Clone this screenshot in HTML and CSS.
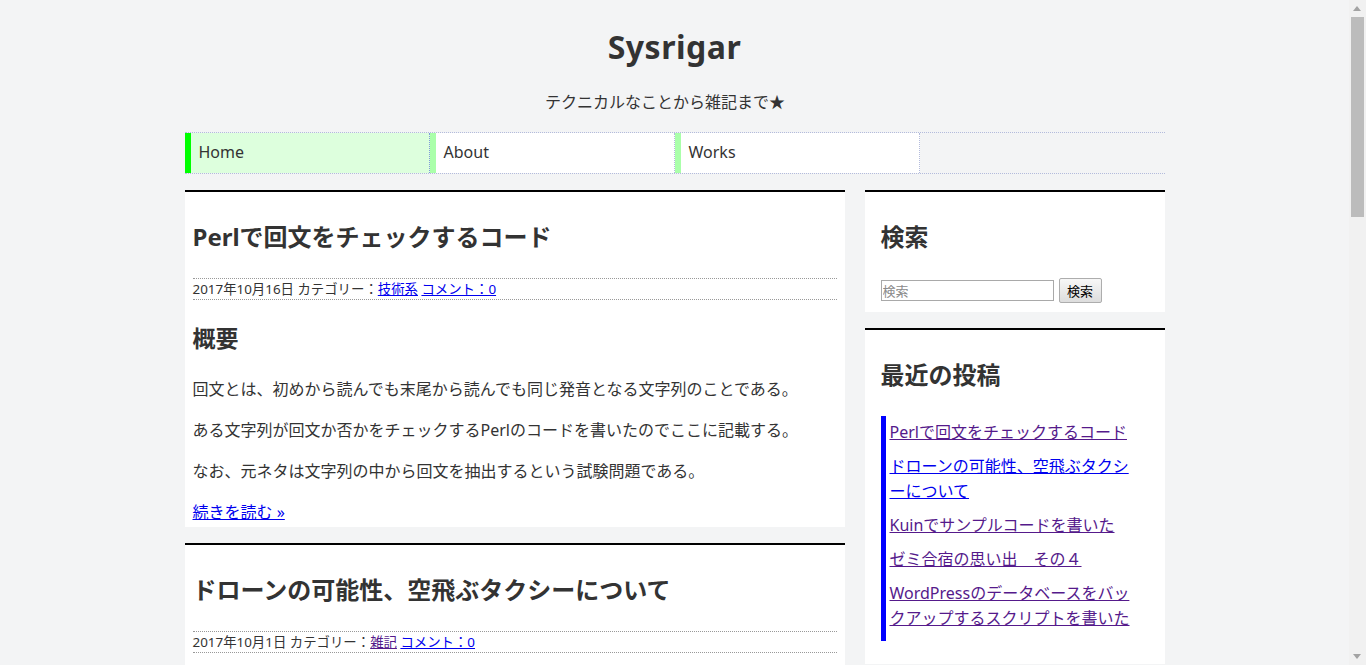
FILE: index.html
```html
<!DOCTYPE html>
<html lang="ja">
<head>
<meta charset="utf-8">
<title>Sysrigar</title>
<link rel="stylesheet" href="styles.css">
</head>
<body>
<div class="wrap">
  <header class="site-header">
    <h1 class="site-title">Sysrigar</h1>
    <p class="site-desc">テクニカルなことから雑記まで★</p>
  </header>
  <nav class="gnav">
    <ul class="gnav-list">
      <li class="gnav-item current"><a href="#">Home</a></li>
      <li class="gnav-item"><a href="#">About</a></li>
      <li class="gnav-item"><a href="#">Works</a></li>
    </ul>
  </nav>
  <div class="columns">
    <main class="main">
      <article class="post">
        <h2 class="post-title">Perlで回文をチェックするコード</h2>
        <div class="post-meta">2017年10月16日 カテゴリー：<a href="#" class="lnk">技術系</a> <a href="#" class="lnk">コメント：0</a></div>
        <h3 class="post-h3">概要</h3>
        <p>回文とは、初めから読んでも末尾から読んでも同じ発音となる文字列のことである。</p>
        <p>ある文字列が回文か否かをチェックするPerlのコードを書いたのでここに記載する。</p>
        <p>なお、元ネタは文字列の中から回文を抽出するという試験問題である。</p>
        <p class="more"><a href="#" class="lnk">続きを読む »</a></p>
      </article>
      <article class="post">
        <h2 class="post-title">ドローンの可能性、空飛ぶタクシーについて</h2>
        <div class="post-meta">2017年10月1日 カテゴリー：<a href="#" class="lnk visited">雑記</a> <a href="#" class="lnk">コメント：0</a></div>
        <h3 class="post-h3">はじめに</h3>
        <p>最近、ドローンを使った空飛ぶタクシーの実験が話題になっている。</p>
        <p>ドローンの可能性について思うところを書いてみる。</p>
        <p>なお、あくまで個人の感想である。</p>
        <p class="more"><a href="#" class="lnk">続きを読む »</a></p>
      </article>
      <article class="post">
        <h2 class="post-title">Kuinでサンプルコードを書いた</h2>
        <div class="post-meta">2017年9月18日 カテゴリー：<a href="#" class="lnk">技術系</a> <a href="#" class="lnk">コメント：0</a></div>
        <h3 class="post-h3">概要</h3>
        <p>Kuinというプログラミング言語でサンプルコードを書いてみた。</p>
        <p>簡単なウィンドウを表示するだけのプログラムである。</p>
        <p>環境構築の手順も合わせて記載する。</p>
        <p class="more"><a href="#" class="lnk">続きを読む »</a></p>
      </article>
      <article class="post">
        <h2 class="post-title">ゼミ合宿の思い出　その４</h2>
        <div class="post-meta">2017年9月3日 カテゴリー：<a href="#" class="lnk visited">雑記</a> <a href="#" class="lnk">コメント：0</a></div>
        <h3 class="post-h3">４日目</h3>
        <p>合宿もいよいよ最終日となった。</p>
        <p>午前中は最終発表を行い、午後は観光をして帰路についた。</p>
        <p>とても充実した４日間であった。</p>
        <p class="more"><a href="#" class="lnk">続きを読む »</a></p>
      </article>
      <article class="post">
        <h2 class="post-title">WordPressのデータベースをバックアップするスクリプト</h2>
        <div class="post-meta">2017年8月20日 カテゴリー：<a href="#" class="lnk">技術系</a> <a href="#" class="lnk">コメント：0</a></div>
        <h3 class="post-h3">概要</h3>
        <p>WordPressのデータベースを定期的にバックアップするスクリプトを書いた。</p>
        <p>cronで毎日実行し、古いバックアップは自動で削除する。</p>
        <p>シェルスクリプトで簡単に実装できる。</p>
        <p class="more"><a href="#" class="lnk">続きを読む »</a></p>
      </article>
    </main>
    <aside class="sidebar">
      <section class="widget">
        <h2 class="widget-title">検索</h2>
        <form class="search">
          <input class="search-input" type="text" placeholder="検索">
          <button class="search-btn" type="button">検索</button>
        </form>
      </section>
      <section class="widget">
        <h2 class="widget-title">最近の投稿</h2>
        <ul class="recent">
          <li><a href="#" class="lnk visited">Perlで回文をチェックするコード</a></li>
          <li><a href="#" class="lnk">ドローンの可能性、空飛ぶタクシーについて</a></li>
          <li><a href="#" class="lnk visited">Kuinでサンプルコードを書いた</a></li>
          <li><a href="#" class="lnk visited">ゼミ合宿の思い出　その４</a></li>
          <li><a href="#" class="lnk visited">WordPressのデータベースをバックアップするスクリプトを書いた</a></li>
        </ul>
      </section>
      <section class="widget">
        <h2 class="widget-title">アーカイブ</h2>
        <ul class="recent">
          <li><a href="#" class="lnk">2017年10月</a></li>
          <li><a href="#" class="lnk">2017年9月</a></li>
          <li><a href="#" class="lnk">2017年8月</a></li>
        </ul>
      </section>
      <section class="widget">
        <h2 class="widget-title">カテゴリー</h2>
        <ul class="recent">
          <li><a href="#" class="lnk">技術系</a></li>
          <li><a href="#" class="lnk visited">雑記</a></li>
        </ul>
      </section>
    </aside>
  </div>
  <footer class="site-footer">Copyright © Sysrigar All Rights Reserved.</footer>
</div>
<div class="fake-scrollbar" aria-hidden="true">
  <div class="sb-arrow sb-up"></div>
  <div class="sb-track"><div class="sb-thumb"></div></div>
  <div class="sb-arrow sb-down"></div>
</div>
</body>
</html>
```
FILE: styles.css
```css
html, body {
  margin: 0;
  padding: 0;
}
html {
  background: #f3f4f5;
}
body {
  background: #f3f4f5;
  color: #333;
  font-family: "Noto Sans", "Noto Sans CJK JP", sans-serif;
  font-size: 16px;
  padding-right: 17px;
}

/* fake window scrollbar (browser chrome in the reference) */
.fake-scrollbar {
  position: fixed;
  top: 0;
  right: 0;
  width: 17px;
  height: 100vh;
  background: #f1f1f1;
  display: flex;
  flex-direction: column;
}
.sb-arrow {
  height: 17px;
  flex: none;
  position: relative;
}
.sb-up::after,
.sb-down::after {
  content: "";
  position: absolute;
  left: 4px;
  width: 0;
  height: 0;
  border-left: 4.5px solid transparent;
  border-right: 4.5px solid transparent;
}
.sb-up::after {
  top: 6px;
  border-bottom: 5px solid #a3a3a3;
}
.sb-down::after {
  top: 6px;
  border-top: 5px solid #a3a3a3;
}
.sb-track {
  flex: 1;
  padding: 0 2px;
}
.sb-thumb {
  height: 200px;
  background: #bcbcbc;
}

.wrap {
  width: 980px;
  margin: 0 auto;
}

.site-header {
  text-align: center;
}
.site-title {
  margin: 27px 0 0;
  font-size: 32px;
  line-height: 40px;
  font-weight: bold;
  letter-spacing: 0.5px;
  color: #333;
}
.site-desc {
  margin: 23px 0 0;
  padding-right: 19px;
  font-size: 16px;
  line-height: 24px;
}

.gnav {
  margin-top: 18px;
}
.gnav-list {
  display: flex;
  list-style: none;
  margin: 0;
  padding: 0;
  border-top: 1px dotted #b3bbdc;
  border-bottom: 1px dotted #b3bbdc;
}
.gnav-item {
  box-sizing: border-box;
  width: 245px;
  height: 40px;
  line-height: 38px;
  padding-left: 8px;
  background: #fff;
  border-left: 6px solid #aaffaa;
  border-right: 1px dotted #b3bbdc;
}
.gnav-item.current {
  background: #ddffdd;
  border-left-color: #00ff00;
  border-right-color: #7f9bd8;
}
.gnav-item a {
  color: #333;
  text-decoration: none;
  font-size: 16px;
}

.columns {
  display: flex;
  gap: 20px;
  margin-top: 16px;
  align-items: flex-start;
}
.main {
  width: 660px;
}
.sidebar {
  width: 300px;
}

.lnk {
  color: #0000ee;
}
.lnk.visited {
  color: #551a8b;
}

.post {
  background: #fff;
  border-top: 2px solid #000;
  padding: 0 8px 2px;
  margin-bottom: 16px;
}
.post-title {
  margin: 27px 0 23px;
  font-size: 24px;
  line-height: 36px;
  font-weight: bold;
}
.post-meta {
  font-size: 13.4px;
  line-height: 20px;
  border-top: 1px dotted #999;
  border-bottom: 1px dotted #999;
}
.post-h3 {
  margin: 21px 0 22px;
  font-size: 23px;
  line-height: 34px;
  font-weight: bold;
}
.post p {
  margin: 0 0 16px;
  line-height: 25px;
  font-size: 16px;
}
.post p.more {
  margin-bottom: 0;
}

.widget {
  background: #fff;
  border-top: 2px solid #000;
  padding: 0 16px 9px;
  margin-bottom: 16px;
}
.widget-title {
  margin: 27px 0 23px;
  font-size: 24px;
  line-height: 36px;
  font-weight: bold;
}
.search {
  display: flex;
  align-items: center;
  height: 25px;
}
.search-input {
  box-sizing: border-box;
  width: 173px;
  height: 21px;
  border: 1px solid #a9a9a9;
  padding: 1px 1px;
  font-family: "Noto Sans CJK JP", sans-serif;
  font-size: 13px;
  color: #333;
  background: #fff;
  outline: none;
}
.search-input::placeholder {
  color: #8a8a8a;
}
.search-btn {
  box-sizing: border-box;
  margin-left: 5px;
  width: 43px;
  height: 25px;
  padding: 0;
  border: 1px solid #adadad;
  border-radius: 2px;
  background: linear-gradient(#f7f7f7, #dddddd);
  font-family: "Noto Sans CJK JP", sans-serif;
  font-size: 13px;
  color: #000;
}

.recent {
  list-style: none;
  margin: 0 9px 14px 0;
  padding: 0 0 5px 4px;
  border-left: 5px solid #0000ff;
  line-break: loose;
}
.recent li {
  padding: 4px 0 5px;
  line-height: 25px;
  font-size: 16px;
}

.site-footer {
  margin-top: 16px;
  padding: 20px 0 30px;
  text-align: center;
  font-size: 13px;
}
```
